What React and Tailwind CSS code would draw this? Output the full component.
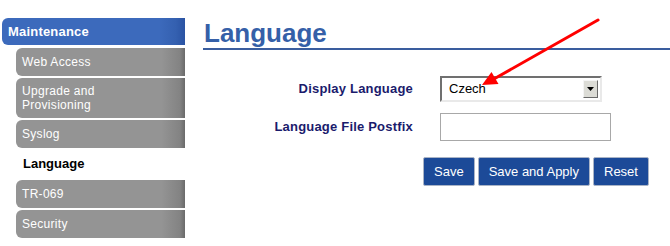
import React from "react";

const NAV = [
  { label: "Web Access", h: "h-[28px]" },
  { label: ["Upgrade and", "Provisioning"], h: "h-[40px]" },
  { label: "Syslog", h: "h-[28px]" },
  { label: "Language", active: true },
  { label: "TR-069", h: "h-[28px]" },
  { label: "Security", h: "h-[28px]" },
];

function SideItem({ item }) {
  if (item.active) {
    return (
      <div className="h-[28px] flex items-center pl-[23px] text-[13px] font-bold text-black">
        {item.label}
      </div>
    );
  }
  const lines = Array.isArray(item.label) ? item.label : [item.label];
  return (
    <div
      className={`${item.h} ml-[16px] rounded-l-[6px] flex flex-col justify-center pl-[6px] text-[12px] leading-[14px] tracking-[0.3px] text-white bg-[linear-gradient(to_right,#949494_86%,#838383_97%,#6a6a6a)]`}
    >
      {lines.map((l) => (
        <span key={l}>{l}</span>
      ))}
    </div>
  );
}

function Btn({ children }) {
  return (
    <button className="h-[29px] px-[10px] bg-[#1c4a98] border border-[#aab4c6] rounded-[2px] text-white text-[13px]">
      {children}
    </button>
  );
}

export default function App() {
  return (
    <div
      className="relative w-[670px] h-[246px] bg-white overflow-hidden flex"
      style={{ fontFamily: '"Liberation Sans", Arial, sans-serif' }}
    >
      {/* Sidebar */}
      <div className="w-[185px] pt-[18px] flex flex-col gap-[2px]">
        <div className="h-[27px] ml-[2px] mb-[1px] rounded-l-[6px] flex items-center pl-[6px] text-[13px] font-bold tracking-[0.2px] text-white bg-[linear-gradient(to_right,#3c6abc_86%,#3460b0_95%,#2a53a3)]">
          Maintenance
        </div>
        {NAV.map((item, i) => (
          <SideItem key={i} item={item} />
        ))}
      </div>

      {/* Main */}
      <div className="flex-1 pt-[18px] pl-[18px]">
        <h1 className="h-[32px] leading-[30px] pl-[1px] text-[26px] font-bold text-[#3560a8] border-b-2 border-[#3a5d9e]">
          Language
        </h1>

        <div className="mt-[26px] grid grid-cols-[210px_auto] gap-x-[27px] gap-y-[11px] items-center">
          <div className="text-right text-[13px] font-bold tracking-[0.2px] text-[#1b1b6c]">
            Display Language
          </div>
          <div className="w-[162px] h-[26px] border-2 border-t-[#707070] border-l-[#707070] border-r-[#e9e9e9] border-b-[#e9e9e9] bg-white flex items-center">
            <span className="flex-1 pl-[7px] text-[13px] font-normal text-black">Czech</span>
            <div className="w-[15px] h-[18px] mr-[2px] bg-[#dcdcd6] border border-t-[#f4f4f4] border-l-[#f4f4f4] border-r-[#6a6a6a] border-b-[#6a6a6a] flex items-center justify-center">
              <svg width="7" height="4" viewBox="0 0 7 4">
                <path d="M0 0 H7 L3.5 4 Z" fill="#000" />
              </svg>
            </div>
          </div>

          <div className="text-right text-[13px] font-bold tracking-[0.2px] text-[#1b1b6c]">
            Language File Postfix
          </div>
          <input
            className="w-[171px] h-[28px] border border-[#a8a8a8] outline-none"
            defaultValue=""
          />
        </div>

        <div className="mt-[16px] ml-[220px] flex gap-[3px]">
          <Btn>Save</Btn>
          <Btn>Save and Apply</Btn>
          <Btn>Reset</Btn>
        </div>
      </div>

      {/* Annotation arrow */}
      <svg className="absolute left-0 top-0 pointer-events-none" width="670" height="246">
        <line x1="598" y1="20" x2="493" y2="79.5" stroke="#ff0000" strokeWidth="3" strokeLinecap="round" />
        <path d="M482 85 L491.5 72 L498.5 84 Z" fill="#ff0000" />
      </svg>
    </div>
  );
}
